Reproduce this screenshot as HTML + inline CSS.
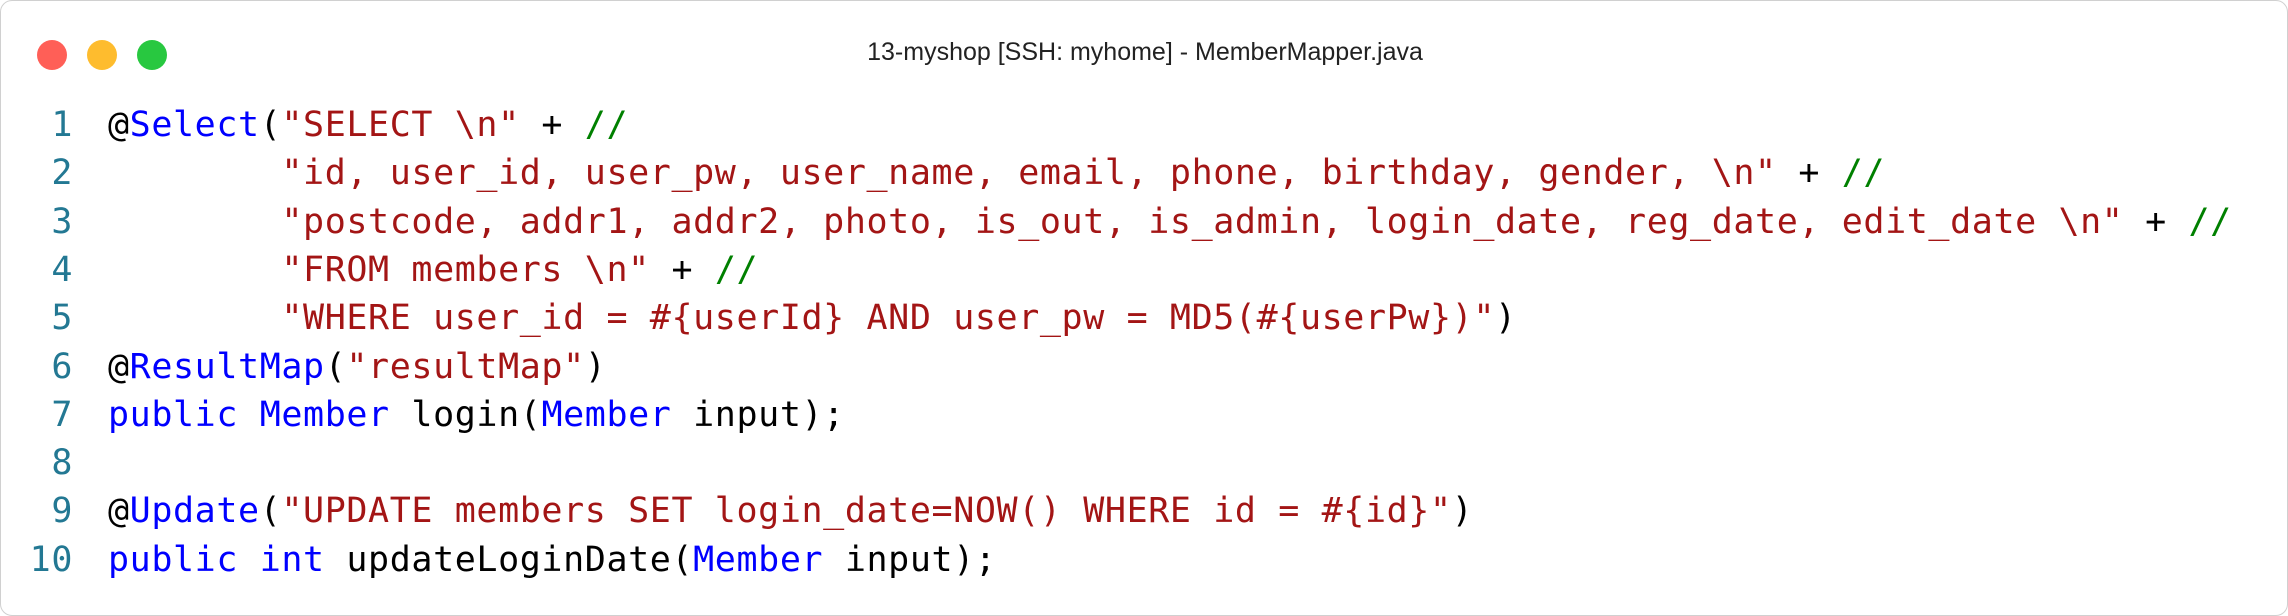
<!DOCTYPE html>
<html><head><meta charset="utf-8"><style>
html,body{margin:0;padding:0;width:2288px;height:616px;overflow:hidden;background:#fff}
.win{position:absolute;left:0;top:0;width:2286px;height:614px;border:1px solid #d0d0d0;border-radius:12px;background:#fff}
.dot{position:absolute;top:39px;width:30px;height:30px;border-radius:50%}
.title{position:absolute;left:808px;width:672px;top:37px;text-align:center;font:25px "Liberation Sans",sans-serif;color:#222;white-space:nowrap}
.code{position:absolute;left:0;top:100px;font-family:"DejaVu Sans Mono",monospace;font-size:35px;letter-spacing:0.6px;color:#000;white-space:pre}
.ln{position:absolute;height:48.3px;line-height:48.3px}
.n{position:absolute;width:72px;text-align:right;left:0;color:#237893}
.c{position:absolute;left:107px}
.k{color:#0000ff}.s{color:#a31515}.g{color:#008000}
</style></head><body>
<div class="win">
<div class="dot" style="left:36px;background:#ff5f57"></div>
<div class="dot" style="left:86px;background:#febc2e"></div>
<div class="dot" style="left:136px;background:#28c840"></div>
<div class="title">13-myshop [SSH: myhome] - MemberMapper.java</div>
<div class="code">
<div class="ln" style="top:0"><span class="n">1</span><span class="c">@<span class="k">Select</span>(<span class="s">"SELECT \n"</span> + <span class="g">//</span></span></div>
<div class="ln" style="top:48.3px"><span class="n">2</span><span class="c">        <span class="s">"id, user_id, user_pw, user_name, email, phone, birthday, gender, \n"</span> + <span class="g">//</span></span></div>
<div class="ln" style="top:96.6px"><span class="n">3</span><span class="c">        <span class="s">"postcode, addr1, addr2, photo, is_out, is_admin, login_date, reg_date, edit_date \n"</span> + <span class="g">//</span></span></div>
<div class="ln" style="top:144.9px"><span class="n">4</span><span class="c">        <span class="s">"FROM members \n"</span> + <span class="g">//</span></span></div>
<div class="ln" style="top:193.2px"><span class="n">5</span><span class="c">        <span class="s">"WHERE user_id = #{userId} AND user_pw = MD5(#{userPw})"</span>)</span></div>
<div class="ln" style="top:241.5px"><span class="n">6</span><span class="c">@<span class="k">ResultMap</span>(<span class="s">"resultMap"</span>)</span></div>
<div class="ln" style="top:289.8px"><span class="n">7</span><span class="c"><span class="k">public</span> <span class="k">Member</span> login(<span class="k">Member</span> input);</span></div>
<div class="ln" style="top:338.1px"><span class="n">8</span></div>
<div class="ln" style="top:386.4px"><span class="n">9</span><span class="c">@<span class="k">Update</span>(<span class="s">"UPDATE members SET login_date=NOW() WHERE id = #{id}"</span>)</span></div>
<div class="ln" style="top:434.7px"><span class="n">10</span><span class="c"><span class="k">public</span> <span class="k">int</span> updateLoginDate(<span class="k">Member</span> input);</span></div>
</div>
</div>
</body></html>
